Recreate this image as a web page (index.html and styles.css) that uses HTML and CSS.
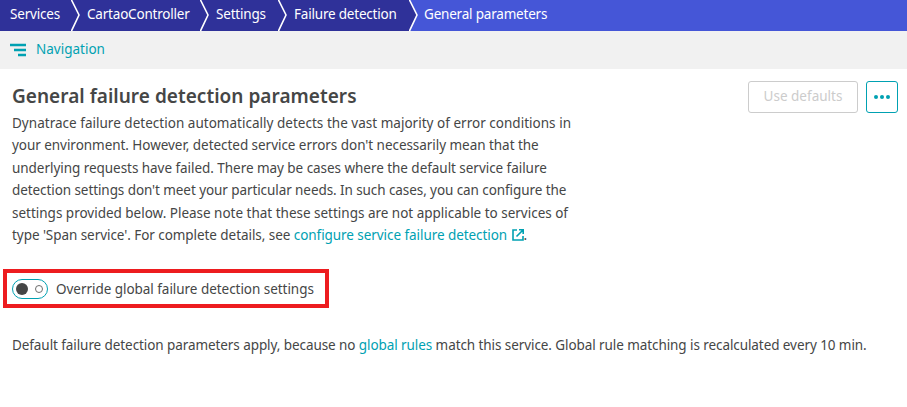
FILE: index.html
```html
<!DOCTYPE html>
<html lang="en">
<head>
<meta charset="utf-8">
<title>General failure detection parameters</title>
<link rel="stylesheet" href="styles.css">
</head>
<body>
<header class="crumbs">
  <a class="crumb c1"><span>Services</span><svg class="chevron" width="10" height="31" viewBox="0 0 10 31"><path d="M0 -1L8 15L0 32"/></svg></a>
  <a class="crumb c2"><span>CartaoController</span><svg class="chevron" width="10" height="31" viewBox="0 0 10 31"><path d="M0 -1L8 15L0 32"/></svg></a>
  <a class="crumb c3"><span>Settings</span><svg class="chevron" width="10" height="31" viewBox="0 0 10 31"><path d="M0 -1L8 15L0 32"/></svg></a>
  <a class="crumb c4"><span>Failure detection</span><svg class="chevron last" width="10" height="31" viewBox="0 0 10 31"><path d="M0 -1L8 15L0 32"/></svg></a>
  <a class="crumb current"><span>General parameters</span></a>
</header>
<nav class="subnav">
  <svg width="16" height="14" viewBox="0 0 16 14"><path d="M0 2H16M4 7H16M8 12H16" stroke="#00a1b2" stroke-width="2.400"/></svg>
  <span class="nav-label">Navigation</span>
</nav>
<main>
  <div class="top">
    <h1>General failure detection parameters</h1>
    <div class="actions">
      <button class="btn disabled">Use defaults</button>
      <button class="btn more" aria-label="More"><i></i><i></i><i></i></button>
    </div>
  </div>
  <p class="intro">
    <span class="line l1">Dynatrace failure detection automatically detects the vast majority of error conditions in</span>
    <span class="line l2">your environment. However, detected service errors don't necessarily mean that the</span>
    <span class="line l3">underlying requests have failed. There may be cases where the default service failure</span>
    <span class="line l4">detection settings don't meet your particular needs. In such cases, you can configure the</span>
    <span class="line l5">settings provided below. Please note that these settings are not applicable to services of</span>
    <span class="line l6">type 'Span service'. For complete details, see <a>configure service failure detection <svg class="external" width="12" height="12" viewBox="0 0 12 12"><path d="M5 1H1V11H11V7M7 .8H11.200V5M11 1L4.500 7.500"/></svg></a>.</span>
  </p>
  <div class="override">
    <span class="switch"><i class="knob"></i><i class="ring"></i></span>
    <span class="override-label">Override global failure detection settings</span>
  </div>
  <p class="status">Default failure detection parameters apply, because no <a>global rules</a> match this service. Global rule matching is recalculated every 10 min.</p>
</main>
</body>
</html>
```
FILE: styles.css
```css
* { box-sizing: border-box; }
body { margin: 0; background: #fff; color: #454646; font: 13.5px/22.4px "Noto Sans", "Open Sans", sans-serif; letter-spacing: -0.08px; }
a { color: #00a1b2; }
.crumbs { display: flex; height: 31px; background: #4556d7; }
.crumb { display: flex; justify-content: space-between; height: 31px; line-height: 29px; padding-left: 6px; background: #2f3199; color: #fff; white-space: nowrap; letter-spacing: -0.2px; }
.c1 { width: 81px; padding-left: 10px; }
.c2 { width: 129px; }
.c3 { width: 78px; }
.c4 { width: 131px; }
.current { background: none; padding-left: 5px; }
.chevron { flex: none; fill: none; stroke: #fff; stroke-width: 1.6; }
.last { background: #4556d7; }
.last path { fill: #2f3199; }
.subnav { display: flex; align-items: center; gap: 10px; height: 38px; padding: 0 10px; background: #f1f1f1; color: #00a1b2; }
.nav-label { position: relative; top: -1px; letter-spacing: 0; }
main { padding: 0 11px 0 12px; }
.top { display: flex; justify-content: space-between; height: 43px; padding-top: 12px; }
h1 { margin: 2px 0 0; font-size: 19px; line-height: 26px; font-weight: 600; letter-spacing: 0.03px; white-space: nowrap; }
.actions { display: flex; gap: 8px; }
.btn { display: flex; align-items: center; justify-content: center; height: 32px; padding: 0; border: 1px solid #ccc; border-radius: 3px; background: #fff; font: inherit; color: #ccc; }
.disabled { width: 110px; padding-bottom: 2px; }
.more { width: 32px; gap: 2px; margin-right: -2px; border-color: #00a1b2; }
.more i { width: 4px; height: 4px; border-radius: 50%; background: #00a1b2; }
.intro { margin: 0; }
.line { display: block; width: max-content; white-space: nowrap; }
.l1 { letter-spacing: 0.02px; }
.l2, .l3 { letter-spacing: -0.045px; }
.l5 { letter-spacing: -0.01px; }
.l6 { letter-spacing: -0.06px; }
.external { margin-left: 1px; vertical-align: -1px; fill: none; stroke: #00a1b2; stroke-width: 1.6; }
.override { display: flex; align-items: center; gap: 8px; width: 326px; height: 39px; margin: 23px 0 0 -9px; padding-left: 5px; border: 4px solid #ed1c1f; }
.override-label { letter-spacing: -0.04px; }
.switch { display: flex; align-items: center; justify-content: space-between; width: 36px; height: 20px; padding: 0 4px 0 3px; border: 1px solid #00a1b2; border-radius: 10px; }
.knob { width: 12px; height: 12px; border-radius: 50%; background: #454646; }
.ring { width: 8px; height: 8px; border: 1.5px solid #6d6d6d; border-radius: 50%; }
.status { margin: 26px 0 0; white-space: nowrap; }
```
